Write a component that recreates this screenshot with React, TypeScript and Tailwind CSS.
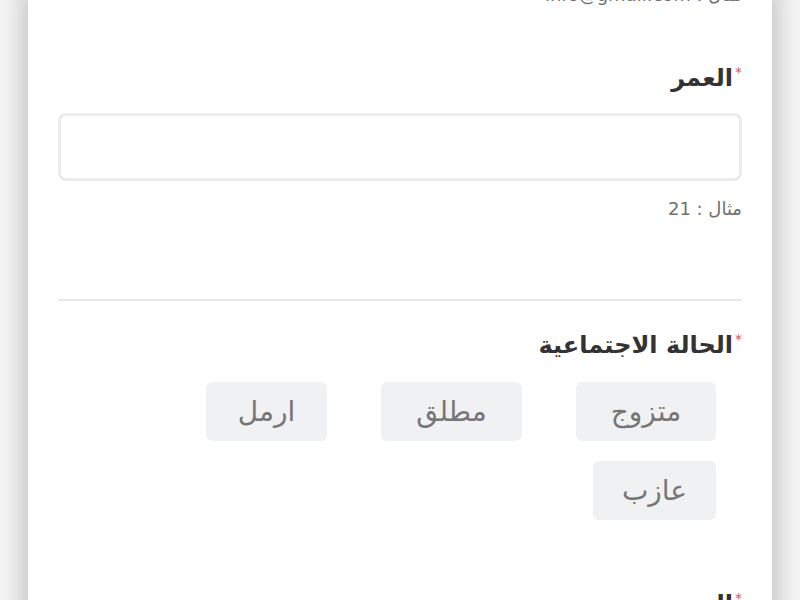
import React from "react";

const statuses = [
    { label: "متزوج", w: "w-[140px]" },
    { label: "مطلق", w: "w-[141px]" },
    { label: "ارمل", w: "w-[121px]" },
    { label: "عازب", w: "w-[123px]" },
];

function Label({ text }: { text: string }) {
    return (
        <div className="flex items-start text-[24px] leading-[32px] font-semibold text-[#333333]">
            <span className="text-[#d9534f] text-[14px] leading-[20px] font-normal ml-[2px]">*</span>
            <span>{text}</span>
        </div>
    );
}

export default function App() {
    return (
        <div
            className="h-[600px] overflow-hidden bg-[#f6f6f6] px-[28px]"
            style={{ fontFamily: '"DejaVu Sans", "Noto Sans", sans-serif' }}
        >
            <div dir="rtl" className="bg-white min-h-[700px] shadow-[0_0_30px_rgba(0,0,0,0.3)] px-[30px] pb-[100px]">
                {/* Email hint, scrolled off the top */}
                <p className="mt-[-17px] text-[18px] leading-[24px] text-[#6f6f6f]">مثال : info@gmail.com</p>

                {/* Age */}
                <div className="mt-[55px]">
                    <Label text="العمر" />
                </div>
                <input
                    type="text"
                    className="mt-[19px] block w-full h-[68px] rounded-[8px] border-[3px] border-[#ececec] bg-white outline-none"
                />
                <p className="mt-[16px] text-[18px] leading-[24px] text-[#6f6f6f]">مثال : 21</p>

                <div className="mt-[78px] h-[2px] bg-[#e8e8e8]" />

                {/* Marital status */}
                <div className="mt-[28px]">
                    <Label text="الحالة الاجتماعية" />
                </div>
                <div className="flex flex-wrap mt-[11px]">
                    {statuses.map((s) => (
                        <button
                            key={s.label}
                            className={`${s.w} mr-[26px] ml-[28px] my-[10px] h-[59px] rounded-[6px] bg-[#f0f1f3] text-[28px] text-[#767676]`}
                        >
                            {s.label}
                        </button>
                    ))}
                </div>

                {/* Next label, cut at the bottom */}
                <div className="mt-[58px]">
                    <Label text="الجنس" />
                </div>
            </div>
        </div>
    );
}
